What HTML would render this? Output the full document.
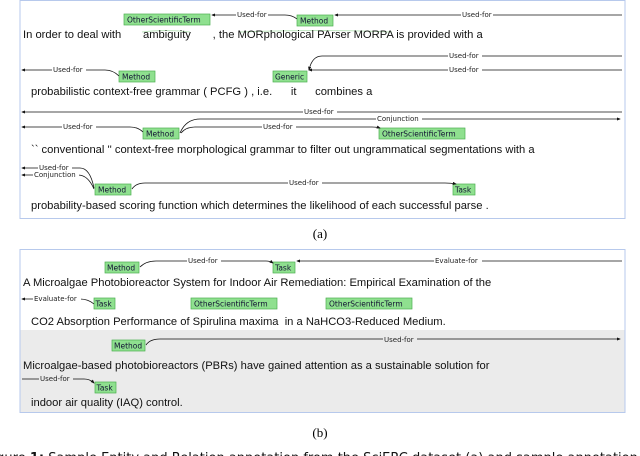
<!DOCTYPE html><html><head><style>
body{margin:0;width:640px;height:456px;overflow:hidden;background:#fff}
svg{display:block}
.t{font-family:"Liberation Sans",sans-serif;font-size:11.2px;fill:#111}
.l{font-family:"DejaVu Sans",sans-serif;font-size:7px;fill:#222}
.lb{font-family:"DejaVu Sans",sans-serif;font-size:7.5px;fill:#113}
.r{fill:#8fe08f;stroke:#4caf50;stroke-width:.7}
.a{stroke:#111;stroke-width:.8;fill:none}
.u{stroke:#bfe6bf;stroke-width:1;fill:none}
</style></head><body>
<svg width="640" height="456" viewBox="0 0 640 456">
<defs><marker id="m" markerWidth="5" markerHeight="4" refX="4" refY="2" orient="auto"><path d="M0,0L5,2L0,4z" fill="#111"/></marker></defs>
<rect x="20" y="0.5" width="605" height="218" fill="#fff" stroke="#b7c9ec"/>
<rect class="r" x="124" y="14" width="86" height="11"/><text class="lb" x="127" y="22.5">OtherScientificTerm</text>
<rect class="r" x="297" y="15" width="36" height="11"/><text class="lb" x="300" y="23.5">Method</text>
<path class="a" d="M297,19 Q292,15 285,15 L212,15" marker-end="url(#m)"/>
<path class="a" d="M622,15 L335,15" marker-end="url(#m)"/>
<rect x="236" y="11" width="32" height="8" fill="#fff"/><text class="l" x="237" y="17">Used-for</text>
<rect x="461" y="11" width="32" height="8" fill="#fff"/><text class="l" x="462" y="17">Used-for</text>
<path class="u" d="M142,32 Q166,29 190,32 M240,32 Q320,29 392,32"/>
<text class="t" x="23" y="38">In order to deal with&#160;&#160;&#160;&#160;&#160;&#160;&#160;ambiguity&#160;&#160;&#160;&#160;&#160;&#160;&#160;, the MORphological PArser MORPA is provided with a</text>
<rect class="r" x="119" y="71" width="36" height="11"/><text class="lb" x="122" y="79.5">Method</text>
<rect class="r" x="273" y="71" width="34" height="11"/><text class="lb" x="275" y="79.5">Generic</text>
<path class="a" d="M119,76 Q113,70 105,70 L22,70" marker-end="url(#m)"/>
<path class="a" d="M622,56 L322,56 Q312,56 309,70" marker-end="url(#m)"/>
<path class="a" d="M622,70 L309,70" marker-end="url(#m)"/>
<rect x="52" y="66" width="34" height="8" fill="#fff"/><text class="l" x="53" y="72">Used-for</text>
<rect x="448" y="52" width="34" height="8" fill="#fff"/><text class="l" x="449" y="58">Used-for</text>
<rect x="448" y="66" width="34" height="8" fill="#fff"/><text class="l" x="449" y="72">Used-for</text>
<text class="t" x="31" y="95">probabilistic context-free grammar ( PCFG ) , i.e.&#160;&#160;&#160;&#160;&#160;&#160;it&#160;&#160;&#160;&#160;&#160;&#160;combines a</text>
<path class="a" d="M622,112 L22,112" marker-end="url(#m)"/>
<rect x="303" y="108" width="34" height="8" fill="#fff"/><text class="l" x="304" y="114">Used-for</text>
<path class="a" d="M180,133 Q186,119 200,119 L620,119" marker-end="url(#m)"/>
<rect x="376" y="115" width="46" height="8" fill="#fff"/><text class="l" x="377" y="121">Conjunction</text>
<rect class="r" x="143" y="128" width="36" height="11"/><text class="lb" x="146" y="136.5">Method</text>
<rect class="r" x="379" y="128" width="86" height="11"/><text class="lb" x="382" y="136.5">OtherScientificTerm</text>
<path class="a" d="M143,132 Q138,127 130,127 L22,127" marker-end="url(#m)"/>
<path class="a" d="M181,133 Q186,127 195,127 L372,127 Q377,127 380,128" marker-end="url(#m)"/>
<rect x="62" y="123" width="34" height="8" fill="#fff"/><text class="l" x="63" y="129">Used-for</text>
<rect x="262" y="123" width="34" height="8" fill="#fff"/><text class="l" x="263" y="129">Used-for</text>
<text class="t" x="31" y="153">`` conventional '' context-free morphological grammar to filter out ungrammatical segmentations with a</text>
<path class="a" d="M94,188 Q90,168 80,168 L22,168" marker-end="url(#m)"/>
<path class="a" d="M94,189 Q88,175 78,175 L22,175" marker-end="url(#m)"/>
<rect x="38" y="164" width="34" height="8" fill="#fff"/><text class="l" x="39" y="170">Used-for</text>
<rect x="33" y="171" width="46" height="8" fill="#fff"/><text class="l" x="34" y="177">Conjunction</text>
<rect class="r" x="95" y="184" width="36" height="11"/><text class="lb" x="98" y="192.5">Method</text>
<rect class="r" x="453" y="184" width="22" height="11"/><text class="lb" x="455" y="192.5">Task</text>
<path class="a" d="M132,189 Q136,183 145,183 L445,183 Q451,183 456,184" marker-end="url(#m)"/>
<rect x="288" y="179" width="34" height="8" fill="#fff"/><text class="l" x="289" y="185">Used-for</text>
<text class="t" x="31" y="209">probability-based scoring function which determines the likelihood of each successful parse .</text>
<text x="320" y="238" text-anchor="middle" style="font-family:'Liberation Serif',serif;font-size:13px">(a)</text>
<rect x="20" y="330" width="605" height="82" fill="#ebebeb"/>
<rect x="20" y="249.5" width="605" height="163" fill="none" stroke="#b7c9ec"/>
<rect class="r" x="105" y="262" width="34" height="11"/><text class="lb" x="107" y="270.5">Method</text>
<rect class="r" x="273" y="262" width="22" height="11"/><text class="lb" x="275" y="270.5">Task</text>
<path class="a" d="M140,267 Q146,261 156,261 L266,261 Q270,261 273,263" marker-end="url(#m)"/>
<path class="a" d="M622,261 L297,261" marker-end="url(#m)"/>
<rect x="187" y="257" width="34" height="8" fill="#fff"/><text class="l" x="188" y="263">Used-for</text>
<rect x="434" y="257" width="48" height="8" fill="#fff"/><text class="l" x="435" y="263">Evaluate-for</text>
<text class="t" x="23" y="286">A Microalgae Photobioreactor System for Indoor Air Remediation: Empirical Examination of the</text>
<rect class="r" x="94" y="298" width="21" height="11"/><text class="lb" x="95.5" y="306.5">Task</text>
<rect class="r" x="191" y="298" width="86" height="11"/><text class="lb" x="194" y="306.5">OtherScientificTerm</text>
<rect class="r" x="326" y="298" width="86" height="11"/><text class="lb" x="329" y="306.5">OtherScientificTerm</text>
<path class="a" d="M94,304 Q88,299 80,299 L22,299" marker-end="url(#m)"/>
<rect x="33" y="295" width="48" height="8" fill="#fff"/><text class="l" x="34" y="301">Evaluate-for</text>
<text class="t" x="31" y="325">CO2 Absorption Performance of Spirulina maxima&#160; in a NaHCO3-Reduced Medium.</text>
<rect class="r" x="112" y="340" width="33" height="11"/><text class="lb" x="114" y="348.5">Method</text>
<path class="a" d="M146,345 Q150,339 160,339 L620,339" marker-end="url(#m)"/>
<rect x="383" y="336" width="34" height="8" fill="#ebebeb"/><text class="l" x="384" y="342">Used-for</text>
<text class="t" x="23" y="369">Microalgae-based photobioreactors (PBRs) have gained attention as a sustainable solution for</text>
<path class="a" d="M22,379 L84,379 Q90,379 94,383" marker-end="url(#m)"/>
<rect x="39" y="375" width="34" height="8" fill="#ebebeb"/><text class="l" x="40" y="381">Used-for</text>
<rect class="r" x="95" y="382" width="21" height="11"/><text class="lb" x="96.5" y="390.5">Task</text>
<text class="t" x="31" y="406">indoor air quality (IAQ) control.</text>
<text x="320" y="437" text-anchor="middle" style="font-family:'Liberation Serif',serif;font-size:13px">(b)</text>
<text x="-14" y="462" style="font-family:'DejaVu Sans',sans-serif;font-size:13px;fill:#111">Figure <tspan font-weight="bold">1:</tspan> Sample Entity and Relation annotation from the SciERC dataset (a) and sample annotation</text>
</svg>
</body></html>
